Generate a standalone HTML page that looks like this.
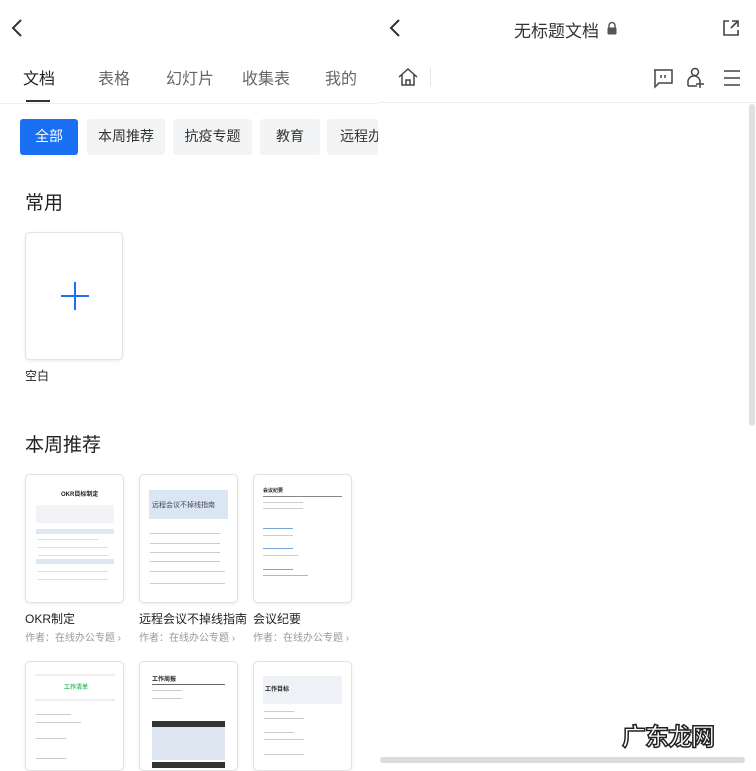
<!DOCTYPE html>
<html><head><meta charset="utf-8"><style>
*{margin:0;padding:0;box-sizing:border-box}
body{width:756px;height:763px;overflow:hidden;background:#fff;font-family:"Liberation Sans","Noto Sans CJK SC",sans-serif;position:relative;color:#222}
.a{position:absolute;white-space:nowrap}
.tab{font-size:16px;color:#666;top:65px}
.chip{position:absolute;top:119px;height:36px;background:#f3f4f5;border-radius:3px;font-size:14px;color:#333;line-height:34px;text-align:center}
.card{position:absolute;width:99px;height:129px;border:1px solid #e2e2e2;border-radius:5px;background:#fff;box-shadow:0 1px 3px rgba(0,0,0,.08);overflow:hidden}
.ln{position:absolute;height:2px;background:#ccc}
.t{font-size:12px;color:#222}
.s{font-size:10px;color:#999}
</style></head><body>
<svg class="a" style="left:10px;top:18px" width="14" height="20"><path d="M11 2 L3 10 L11 18" stroke="#333" stroke-width="2" fill="none"/></svg>
<div class="a tab" style="left:23px;color:#222">文档</div>
<div class="a tab" style="left:98px">表格</div>
<div class="a tab" style="left:166px">幻灯片</div>
<div class="a tab" style="left:242px">收集表</div>
<div class="a tab" style="left:325px">我的</div>
<div class="a" style="left:26px;top:100px;width:24px;height:2px;background:#333"></div>
<div class="a" style="left:0;top:103px;width:378px;height:1px;background:#eee"></div>
<div class="chip" style="left:20px;width:58px;background:#1a6ff2;color:#fff">全部</div>
<div class="chip" style="left:87px;width:78px">本周推荐</div>
<div class="chip" style="left:173px;width:79px">抗疫专题</div>
<div class="chip" style="left:260px;width:60px">教育</div>
<div class="chip" style="left:327px;width:60px;text-align:left;padding-left:13px">远程办</div>
<div class="a" style="left:25px;top:188px;font-size:19px;color:#222">常用</div>
<div class="card" style="left:25px;top:232px;width:98px;height:128px"><div class="a" style="left:35px;top:62px;width:28px;height:2px;background:#1a6ff2"></div><div class="a" style="left:48px;top:49px;width:2px;height:28px;background:#1a6ff2"></div></div>
<div class="a" style="left:25px;top:367px;font-size:12px">空白</div>
<div class="a" style="left:25px;top:430px;font-size:19px;color:#222">本周推荐</div>

<div class="card" style="left:25px;top:474px">
 <div class="a" style="left:35px;top:14px;font-size:6px;font-weight:bold">OKR目标制定</div>
 <div class="a" style="left:10px;top:30px;width:78px;height:18px;background:#f1f3f6"></div>
 <div class="a" style="left:10px;top:54px;width:78px;height:5px;background:#dfe7f3"></div>
 <div class="ln" style="left:12px;top:64px;width:60px;height:1px;background:#ddd"></div>
 <div class="ln" style="left:12px;top:72px;width:70px;height:1px;background:#ddd"></div>
 <div class="ln" style="left:12px;top:80px;width:70px;height:1px;background:#ddd"></div>
 <div class="a" style="left:10px;top:84px;width:78px;height:5px;background:#dfe7f3"></div>
 <div class="ln" style="left:12px;top:96px;width:70px;height:1px;background:#ddd"></div>
 <div class="ln" style="left:12px;top:104px;width:70px;height:1px;background:#ddd"></div>
</div>
<div class="card" style="left:139px;top:474px">
 <div class="a" style="left:9px;top:15px;width:79px;height:29px;background:#dbe6f3"></div>
 <div class="a" style="left:12px;top:25px;font-size:7px;color:#445">远程会议不掉线指南</div>
 <div class="ln" style="left:10px;top:58px;width:70px;height:1px"></div>
 <div class="ln" style="left:10px;top:68px;width:70px;height:1px"></div>
 <div class="ln" style="left:10px;top:77px;width:70px;height:1px"></div>
 <div class="ln" style="left:10px;top:86px;width:70px;height:1px"></div>
 <div class="ln" style="left:10px;top:96px;width:75px;height:1px"></div>
 <div class="ln" style="left:10px;top:108px;width:75px;height:1px"></div>
</div>
<div class="card" style="left:253px;top:474px">
 <div class="a" style="left:9px;top:12px;font-size:5px;font-weight:bold">会议纪要</div>
 <div class="ln" style="left:9px;top:21px;width:79px;height:1px;background:#888"></div>
 <div class="ln" style="left:9px;top:27px;width:40px;height:1px"></div>
 <div class="ln" style="left:9px;top:33px;width:40px;height:1px"></div>
 <div class="ln" style="left:9px;top:53px;width:30px;height:1px;background:#7aa5d8"></div>
 <div class="ln" style="left:9px;top:60px;width:30px;height:1px"></div>
 <div class="ln" style="left:9px;top:73px;width:30px;height:1px;background:#7aa5d8"></div>
 <div class="ln" style="left:9px;top:80px;width:35px;height:1px"></div>
 <div class="ln" style="left:9px;top:94px;width:30px;height:1px;background:#7aa5d8"></div>
 <div class="ln" style="left:9px;top:100px;width:45px;height:1px;background:#8cd0a8"></div>
</div>
<div class="a t" style="left:25px;top:610px">OKR制定</div>
<div class="a t" style="left:139px;top:610px">远程会议不掉线指南</div>
<div class="a t" style="left:253px;top:610px">会议纪要</div>
<div class="a s" style="left:25px;top:629px">作者：在线办公专题 ›</div>
<div class="a s" style="left:139px;top:629px">作者：在线办公专题 ›</div>
<div class="a s" style="left:253px;top:629px">作者：在线办公专题 ›</div>

<div class="card" style="left:25px;top:661px;height:110px">
 <div class="ln" style="left:9px;top:12px;width:80px;height:2px;background:#eee"></div>
 <div class="a" style="left:38px;top:20px;font-size:6px;color:#3bbf6a;font-weight:bold">工作清单</div>
 <div class="ln" style="left:9px;top:37px;width:80px;height:2px;background:#eee"></div>
 <div class="ln" style="left:10px;top:52px;width:35px;height:1px"></div>
 <div class="ln" style="left:10px;top:60px;width:45px;height:1px"></div>
 <div class="ln" style="left:10px;top:76px;width:30px;height:1px"></div>
 <div class="ln" style="left:10px;top:96px;width:30px;height:1px"></div>
</div>
<div class="card" style="left:139px;top:661px;height:110px">
 <div class="a" style="left:12px;top:12px;font-size:6px;font-weight:bold">工作周报</div>
 <div class="ln" style="left:12px;top:22px;width:73px;height:1px;background:#666"></div>
 <div class="ln" style="left:12px;top:28px;width:30px;height:1px"></div>
 <div class="ln" style="left:12px;top:36px;width:30px;height:1px"></div>
 <div class="a" style="left:12px;top:59px;width:73px;height:6px;background:#333"></div>
 <div class="a" style="left:12px;top:65px;width:73px;height:33px;background:#dde6f0"></div>
 <div class="a" style="left:12px;top:100px;width:73px;height:6px;background:#333"></div>
</div>
<div class="card" style="left:253px;top:661px;height:110px">
 <div class="a" style="left:9px;top:14px;width:79px;height:28px;background:#eef1f5"></div>
 <div class="a" style="left:11px;top:22px;font-size:6px;font-weight:bold">工作目标</div>
 <div class="ln" style="left:10px;top:49px;width:30px;height:1px"></div>
 <div class="ln" style="left:10px;top:56px;width:40px;height:1px"></div>
 <div class="ln" style="left:10px;top:70px;width:30px;height:1px"></div>
 <div class="ln" style="left:10px;top:77px;width:40px;height:1px"></div>
 <div class="ln" style="left:10px;top:92px;width:40px;height:1px"></div>
</div>

<div class="a" style="left:378px;top:0;width:378px;height:763px;background:#fff"></div>
<svg class="a" style="left:388px;top:18px" width="14" height="20"><path d="M11 2 L3 10 L11 18" stroke="#333" stroke-width="2" fill="none"/></svg>
<div class="a" style="left:514px;top:17px;font-size:17px;color:#333">无标题文档</div>
<svg class="a" style="left:606px;top:21px" width="12" height="14"><path d="M3 7 V4.5 a3 3 0 0 1 6 0 V7" stroke="#555" stroke-width="1.5" fill="none"/><rect x="1.5" y="6.5" width="9" height="7" rx="1" fill="#555"/></svg>
<svg class="a" style="left:721px;top:18px" width="20" height="20"><path d="M8 3 H3 V17 H17 V12" stroke="#444" stroke-width="1.6" fill="none"/><path d="M11 3 H17 V9 M17 3 L10 10" stroke="#444" stroke-width="1.6" fill="none"/></svg>
<svg class="a" style="left:397px;top:66px" width="22" height="22"><path d="M2 11 L11 3 L20 11 M5 9 V19 H17 V9 M9 19 V14 H13 V19" stroke="#444" stroke-width="1.5" fill="none"/></svg>
<div class="a" style="left:430px;top:68px;width:1px;height:18px;background:#e5e5e5"></div>
<svg class="a" style="left:652px;top:67px" width="22" height="22"><path d="M2 3 H20 V16 H7 L3 20 V3 Z" stroke="#444" stroke-width="1.5" fill="none"/><path d="M9 8 V11 M13 8 V11" stroke="#444" stroke-width="1.5"/></svg>
<svg class="a" style="left:685px;top:66px" width="24" height="24"><circle cx="10" cy="6" r="3.5" stroke="#444" stroke-width="1.5" fill="none"/><path d="M3 20 V17 a6 6 0 0 1 12 -2 M3 20 H12 M15 14 V22 M11 18 H19" stroke="#444" stroke-width="1.5" fill="none"/></svg>
<svg class="a" style="left:722px;top:68px" width="20" height="20"><path d="M2 3 H18 M2 10 H18 M2 17 H18" stroke="#444" stroke-width="1.5"/></svg>
<div class="a" style="left:378px;top:102px;width:378px;height:1px;background:#eee"></div>
<div class="a" style="left:749px;top:104px;width:6px;height:322px;background:#e0e0e0;border-radius:3px"></div>
<div class="a" style="left:380px;top:757px;width:365px;height:6px;background:#dcdcdc;border-radius:3px"></div>
<div class="a" style="left:622px;top:717px;font-size:24px;font-weight:bold;color:#fff;-webkit-text-stroke:1.5px #222;letter-spacing:-1px">广东龙网</div>
</body></html>
